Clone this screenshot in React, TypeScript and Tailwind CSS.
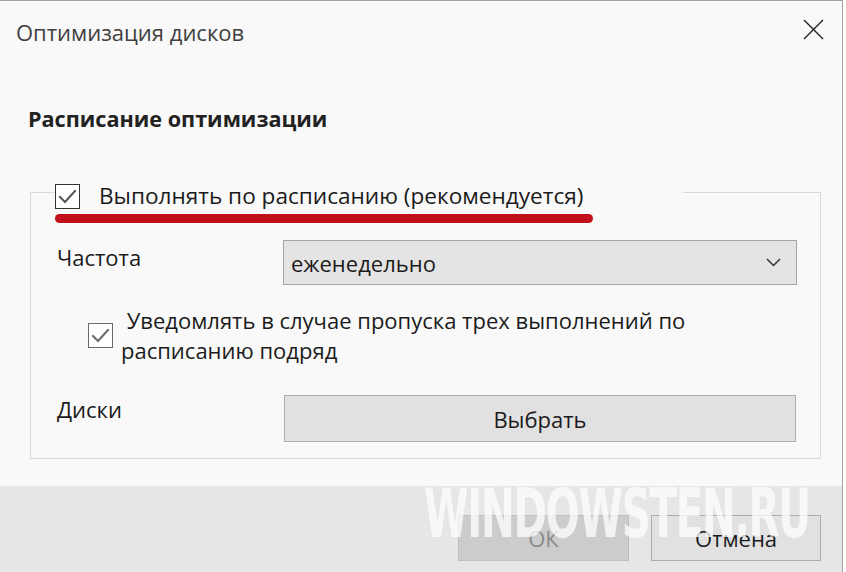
import React from "react";

function Check({ border, mark }: { border: string; mark: string }) {
  return (
    <span className={`flex h-[25px] w-[25px] shrink-0 items-center justify-center border bg-white ${border}`}>
      <svg width="23" height="23" viewBox="0 0 23 23" fill="none" aria-hidden="true">
        <path d="M4 12 L9 17 L19 6" stroke={mark} strokeWidth="2" strokeLinecap="square" />
      </svg>
    </span>
  );
}

export default function App() {
  return (
    <div className="relative h-[572px] w-[846px] overflow-hidden bg-white font-['Open_Sans','Noto_Sans',sans-serif] text-[#1b1b1b]">
      <div className="flex h-full w-[843px] flex-col border-r border-t border-[#a3a3a3] bg-[#f9f9f9]">
        <div className="flex h-[59px] items-start justify-between">
          <p className="pl-[16px] pt-[17px] text-[22px] leading-[28px] text-[#404040]">Оптимизация дисков</p>
          <button className="mr-[18px] mt-[17px] flex h-[22px] w-[22px] items-center justify-center" aria-label="Закрыть">
            <svg width="21" height="21" viewBox="0 0 21 21" aria-hidden="true">
              <path d="M1 1 L20 20 M20 1 L1 20" stroke="#222" strokeWidth="1.4" />
            </svg>
          </button>
        </div>

        <h2 className="mt-[45px] pl-[28px] text-[21.6px] font-bold leading-[28px] text-[#222]">Расписание оптимизации</h2>

        <div className="ml-[30px] mt-[59px] w-[791px] border border-[#d9d9d9] pb-[16px]">
          <div className="-mt-[10px] ml-[24px] flex h-[26px] w-[628px] items-center gap-[19px] bg-[#f9f9f9]">
            <Check border="border-[#333]" mark="#555" />
            <span className="text-[22.6px] leading-[26px]">Выполнять по расписанию (рекомендуется)</span>
          </div>

          <div className="mt-[31px] flex items-start pl-[26px]">
            <span className="w-[226px] pt-[3px] text-[22px] leading-[28px]">Частота</span>
            <div className="flex h-[45px] w-[514px] items-center justify-between border border-[#a6a6a6] bg-[#e4e4e4] pl-[7px] pr-[15px]">
              <span className="text-[22px] leading-[28px]">еженедельно</span>
              <svg width="15" height="9" viewBox="0 0 15 9" fill="none" aria-hidden="true">
                <path d="M1 1 L7.5 7.5 L14 1" stroke="#333" strokeWidth="1.5" />
              </svg>
            </div>
          </div>

          <div className="mt-[20px] flex items-center gap-[8px] pl-[57px]">
            <Check border="border-[#6a6a6a]" mark="#6a6a6a" />
            <p className="text-[22px] leading-[30px]">
              {"\u00a0"}Уведомлять в случае пропуска трех выполнений по
              <br />
              расписанию подряд
            </p>
          </div>

          <div className="mt-[30px] flex items-start pl-[26px]">
            <span className="w-[227px] text-[22px] leading-[28px]">Диски</span>
            <button className="h-[47px] w-[512px] border border-[#adadad] bg-[#e1e1e1] text-[22px] leading-[28px]">
              Выбрать
            </button>
          </div>
        </div>

        <div className="mt-auto flex h-[86px] items-start justify-end gap-[22px] bg-[#e6e6e6] pr-[21px] pt-[29px]">
          <button disabled className="h-[46px] w-[171px] border border-[#bfbfbf] bg-[#cccccc] text-[22px] leading-[28px] text-[#8a8a8a]">
            ОК
          </button>
          <button className="h-[46px] w-[170px] border border-[#adadad] bg-[#e1e1e1] text-[22px] leading-[28px]">
            Отмена
          </button>
        </div>
      </div>

      <div className="absolute left-[55px] top-[214px] h-[9px] w-[538px] rounded-full bg-[#c2101a]" />

      <span className="pointer-events-none absolute left-[424px] top-[490px] origin-left scale-x-[0.66] font-['DejaVu_Sans_Condensed','DejaVu_Sans',sans-serif] text-[68px] font-bold leading-[48px] tracking-[-2px] text-white opacity-75">
        WINDOWSTEN.RU
      </span>
    </div>
  );
}
